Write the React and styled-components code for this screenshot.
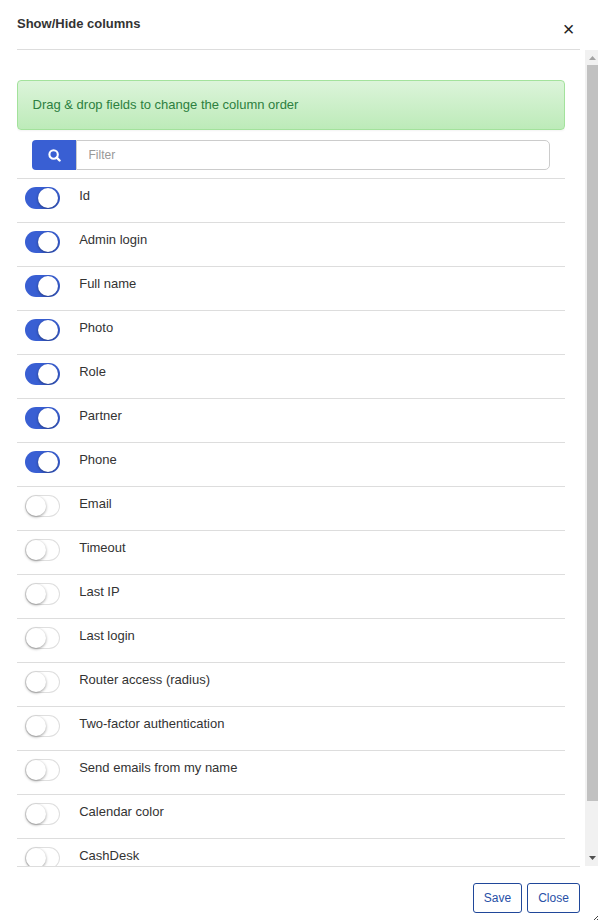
import React from "react";
import styled, { createGlobalStyle } from "styled-components";

const GlobalStyle = createGlobalStyle`
  *, *::before, *::after { box-sizing: border-box; }
  html, body { margin: 0; overflow: hidden; background: #fff; }
  body, button, input {
    font-family: "Liberation Sans", Arial, sans-serif;
    font-size: 13px;
    color: #333;
  }
`;

const Dialog = styled.div`
  display: flex;
  flex-direction: column;
  width: 598px;
  height: 920px;
  background: #fff;
  position: relative;
  overflow: hidden;
`;

const Header = styled.header`
  display: flex;
  justify-content: space-between;
  flex: none;
  height: 50px;
  margin: 0 18px 0 17px;
  border-bottom: 1px solid #ddd;
`;

const Title = styled.h1`
  margin: 16px 0 0;
  font-size: 13px;
  line-height: 16px;
  font-weight: bold;
  color: #333;
`;

const CloseIcon = styled.button`
  width: 12px;
  height: 20px;
  margin: 19px 5.5px 0 0;
  padding: 0;
  border: 0;
  background: none;
  color: #222;
  font-size: 20px;
  line-height: 20px;
`;

const Body = styled.div`
  display: flex;
  justify-content: space-between;
  flex: none;
  height: 816px;
  overflow: hidden;
`;

const Content = styled.main`
  width: 548px;
  height: 816px;
  margin-left: 17px;
  padding-top: 30px;
  overflow: hidden;
`;

const Alert = styled.div`
  height: 50px;
  padding: 0 14.5px;
  line-height: 48px;
  color: #2d8040;
  border: 1px solid #a3e29c;
  border-radius: 4px;
  background: linear-gradient(#dcf4da, #bdebb9);
  box-shadow: 0 1px 2px rgba(0, 0, 0, 0.05);
`;

const FilterGroup = styled.div`
  display: flex;
  height: 30px;
  margin: 10px 15px 8px;
`;

const SearchButton = styled.button`
  display: flex;
  align-items: center;
  justify-content: center;
  width: 44px;
  padding: 1px 0 0 1px;
  border: 0;
  border-radius: 4px 0 0 4px;
  background: #395fd3;
`;

const FilterInput = styled.input`
  flex: 1;
  min-width: 0;
  padding: 0 12px 1px 11.5px;
  border: 1px solid #ccc;
  border-left-width: 1px;
  border-radius: 0 5px 5px 0;
  font-size: 12px;
  outline: none;
  &::placeholder { color: #999; opacity: 1; }
`;

const List = styled.ul`
  margin: 0;
  padding: 0;
  list-style: none;
`;

const Row = styled.li`
  display: flex;
  height: 44px;
  padding: 8px 8px 0;
  border-top: 1px solid #ddd;
`;

const Toggle = styled.span`
  display: flex;
  flex: none;
  align-items: center;
  justify-content: ${(p) => (p.$on ? "flex-end" : "flex-start")};
  width: 35px;
  height: 22px;
  margin-right: 19.2px;
  padding: 0 2px 0 1px;
  overflow: ${(p) => (p.$on ? "hidden" : "visible")};
  border-radius: 11px;
  background: ${(p) => (p.$on ? "#395fd3" : "#fff")};
  box-shadow: ${(p) => (p.$on ? "none" : "inset 0 0 0 1px #dfdfdf")};
`;

const Knob = styled.span`
  width: 20px;
  height: 20px;
  border-radius: 50%;
  background: #fff;
  box-shadow: 0 1px 3px rgba(0, 0, 0, 0.4);
`;

const Label = styled.span`
  line-height: 18px;
`;

const ScrollTrack = styled.div`
  display: flex;
  flex-direction: column;
  width: 13px;
  padding-left: 2px;
  background: #f1f1f1;
`;

const ScrollThumb = styled.div`
  height: 736px;
  background: #c1c1c1;
`;

const ScrollArrow = styled.div`
  display: flex;
  justify-content: center;
  height: 15px;
  padding-top: ${(p) => (p.$down ? "5px" : "6px")};
  margin-top: ${(p) => (p.$down ? "auto" : "0")};
  svg { display: block; }
`;

const Footer = styled.footer`
  display: flex;
  justify-content: flex-end;
  gap: 5px;
  flex: none;
  height: 54px;
  margin: 0 18px 0 17px;
  padding-top: 16px;
  border-top: 1px solid #ddd;
`;

const ActionButton = styled.button`
  width: ${(p) => p.$width}px;
  height: 30px;
  padding: 0;
  border: 1px solid #20489a;
  border-radius: 3px;
  background: #fff;
  color: #2850a7;
  font-size: 12px;
`;

const ResizeGrip = styled.svg`
  position: absolute;
  right: 0;
  bottom: 0;
`;

const columns = [
  ["Id", true],
  ["Admin login", true],
  ["Full name", true],
  ["Photo", true],
  ["Role", true],
  ["Partner", true],
  ["Phone", true],
  ["Email", false],
  ["Timeout", false],
  ["Last IP", false],
  ["Last login", false],
  ["Router access (radius)", false],
  ["Two-factor authentication", false],
  ["Send emails from my name", false],
  ["Calendar color", false],
  ["CashDesk", false],
];

export default function App() {
  return (
    <Dialog>
      <GlobalStyle />
      <Header>
        <Title>Show/Hide columns</Title>
        <CloseIcon aria-label="Close dialog">×</CloseIcon>
      </Header>
      <Body>
        <Content>
          <Alert>Drag &amp; drop fields to change the column order</Alert>
          <FilterGroup>
            <SearchButton aria-label="Search">
              <svg width="13" height="13" viewBox="0 0 13 13" fill="none" stroke="#fff" strokeWidth="2.1">
                <circle cx="5.6" cy="5.5" r="4.2" />
                <path d="M8.7 8.6 11.6 11.5" strokeWidth="2.4" strokeLinecap="round" />
              </svg>
            </SearchButton>
            <FilterInput placeholder="Filter" />
          </FilterGroup>
          <List>
            {columns.map(([name, on]) => (
              <Row key={name}>
                <Toggle $on={on}>
                  <Knob />
                </Toggle>
                <Label>{name}</Label>
              </Row>
            ))}
          </List>
        </Content>
        <ScrollTrack>
          <ScrollArrow>
            <svg width="7" height="4" viewBox="0 0 7 4">
              <path d="M0 4 3.5 0 7 4Z" fill="#a3a3a3" />
            </svg>
          </ScrollArrow>
          <ScrollThumb />
          <ScrollArrow $down>
            <svg width="7" height="4" viewBox="0 0 7 4">
              <path d="M0 0H7L3.5 4Z" fill="#505050" />
            </svg>
          </ScrollArrow>
        </ScrollTrack>
      </Body>
      <Footer>
        <ActionButton $width={49}>Save</ActionButton>
        <ActionButton $width={53}>Close</ActionButton>
      </Footer>
      <ResizeGrip width="7" height="4" viewBox="0 0 7 4">
        <path d="M3 4 7 0M6 4 7 3" stroke="#444" />
      </ResizeGrip>
    </Dialog>
  );
}
